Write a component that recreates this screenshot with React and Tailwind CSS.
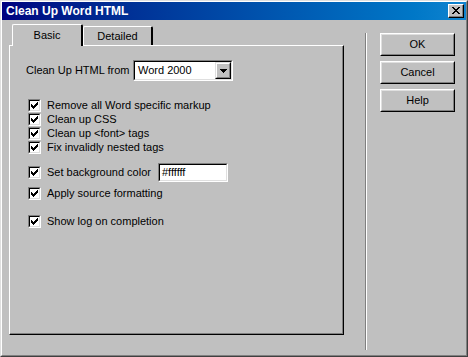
import { useState } from 'react';

const font = { fontFamily: '"Liberation Sans", Arial, sans-serif' };

// 7x7 classic check mark, one rect per pixel run
const checkRuns = [
  [6, 0, 1],
  [5, 1, 2],
  [0, 2, 1], [4, 2, 3],
  [0, 3, 2], [3, 3, 3],
  [0, 4, 5],
  [1, 5, 3],
  [2, 6, 1],
];

const Check = ({ checked, onToggle }) => (
  <div
    onClick={onToggle}
    className="w-[13px] h-[13px] shrink-0 border border-t-[#808080] border-l-[#808080] border-r-white border-b-white cursor-default"
  >
    <div className="w-full h-full border border-t-black border-l-black border-r-[#dfdfdf] border-b-[#dfdfdf] bg-white flex items-center justify-center">
      {checked && (
        <svg width="7" height="7" viewBox="0 0 7 7" shapeRendering="crispEdges">
          {checkRuns.map(([x, y, w], i) => (
            <rect key={i} x={x} y={y} width={w} height="1" fill="#000" />
          ))}
        </svg>
      )}
    </div>
  </div>
);

const Row = ({ label, checked, onToggle, className = '', children }) => (
  <div className={`flex items-center ${className}`}>
    <Check checked={checked} onToggle={onToggle} />
    <span className="ml-[6px] text-[11px] leading-[13px] text-black whitespace-nowrap">{label}</span>
    {children}
  </div>
);

const Sunken = ({ className = '', children }) => (
  <div className={`border border-t-[#808080] border-l-[#808080] border-r-white border-b-white ${className}`}>
    <div className="w-full h-full border border-t-black border-l-black border-r-[#dfdfdf] border-b-[#dfdfdf] bg-white flex items-center">
      {children}
    </div>
  </div>
);

const Btn = ({ children }) => (
  <button
    type="button"
    className="w-[75px] h-[23px] border border-t-white border-l-white border-r-black border-b-black p-0 bg-[#c0c0c0]"
  >
    <div className="w-full h-full border border-t-[#dfdfdf] border-l-[#dfdfdf] border-r-[#808080] border-b-[#808080] flex items-center justify-center text-[11px] text-black">
      {children}
    </div>
  </button>
);

export default function App() {
  const [tab, setTab] = useState('basic');
  const [opts, setOpts] = useState({
    remove: true,
    css: true,
    font: true,
    nested: true,
    bg: true,
    format: true,
    log: true,
  });
  const toggle = (k) => () => setOpts((o) => ({ ...o, [k]: !o[k] }));

  return (
    <div style={font} className="w-[468px] h-[357px] bg-[#c0c0c0] border border-t-[#dfdfdf] border-l-[#dfdfdf] border-r-[#404040] border-b-[#404040] select-none">
      <div className="w-full h-full border border-t-white border-l-white border-r-[#808080] border-b-[#808080]">
        {/* title bar */}
        <div className="h-[18px] bg-gradient-to-r from-[#000080] to-[#1084d0] flex items-center pl-[4px] pr-[2px]">
          <span className="text-white font-bold text-[12px] leading-none flex-1">Clean Up Word HTML</span>
          <button
            type="button"
            className="w-[16px] h-[14px] p-0 bg-[#c0c0c0] border border-t-white border-l-white border-r-black border-b-black"
          >
            <div className="w-full h-full border-r border-b border-r-[#808080] border-b-[#808080] flex items-center justify-center">
              <svg width="8" height="7" viewBox="0 0 8 7" shapeRendering="crispEdges">
                <path d="M0 0h2v1h1v1h2v-1h1v-1h2v1h-1v1h-1v1h-1v1h1v1h1v1h1v1h-2v-1h-1v-1h-2v1h-1v1h-2v-1h1v-1h1v-1h1v-1h-1v-1h-1v-1h-1z" fill="#000" />
              </svg>
            </div>
          </button>
        </div>

        <div className="flex pl-[7px] pt-[4px]">
          {/* tabbed area */}
          <div className="w-[335px]">
            <div className="flex h-[21px] pl-[3px] items-end relative z-10">
              <button
                type="button"
                onClick={() => setTab('basic')}
                className={`w-[71px] p-0 border-t border-l border-r-2 border-t-white border-l-white border-r-black rounded-tl-[2px] rounded-tr-[2px] bg-[#c0c0c0] text-[11px] text-black ${
                  tab === 'basic' ? 'h-[22px] mb-[-1px]' : 'h-[19px] mt-[2px]'
                }`}
              >
                Basic
              </button>
              <button
                type="button"
                onClick={() => setTab('detailed')}
                className={`w-[70px] p-0 border-t border-l border-r-2 border-t-white border-l-white border-r-black rounded-tl-[2px] rounded-tr-[2px] bg-[#c0c0c0] text-[11px] text-black ${
                  tab === 'detailed' ? 'h-[22px] mb-[-1px]' : 'h-[19px]'
                }`}
              >
                Detailed
              </button>
            </div>
            <div className="h-[290px] border border-t-white border-l-white border-r-black border-b-black">
              <div className="w-full h-full border-r border-b border-r-[#808080] border-b-[#808080] pl-[16px] pt-[14px]">
                {tab === 'basic' && (
                  <>
                    <div className="flex items-center">
                      <span className="text-[11px] text-black whitespace-nowrap w-[107px]">Clean Up HTML from</span>
                      <Sunken className="w-[100px] h-[21px]">
                        <span className="pl-[3px] text-[11px] text-black flex-1">Word 2000</span>
                        <div className="w-[16px] h-[17px] border border-t-[#dfdfdf] border-l-[#dfdfdf] border-r-black border-b-black bg-[#c0c0c0]">
                          <div className="w-full h-full border border-t-white border-l-white border-r-[#808080] border-b-[#808080] flex items-center justify-center">
                            <svg width="7" height="4" viewBox="0 0 7 4" shapeRendering="crispEdges">
                              <path d="M0 0h7v1h-1v1h-1v1h-1v1h-1v-1h-1v-1h-1v-1h-1z" fill="#000" />
                            </svg>
                          </div>
                        </div>
                      </Sunken>
                    </div>

                    <div className="pl-[2px] mt-[17px] flex flex-col">
                      <Row className="h-[14px]" label="Remove all Word specific markup" checked={opts.remove} onToggle={toggle('remove')} />
                      <Row className="h-[14px]" label="Clean up CSS" checked={opts.css} onToggle={toggle('css')} />
                      <Row className="h-[14px]" label="Clean up <font> tags" checked={opts.font} onToggle={toggle('font')} />
                      <Row className="h-[14px]" label="Fix invalidly nested tags" checked={opts.nested} onToggle={toggle('nested')} />
                      <Row className="h-[19px] mt-[9px]" label="Set background color" checked={opts.bg} onToggle={toggle('bg')}>
                        <Sunken className="ml-[7px] w-[70px] h-[19px]">
                          <span className="pl-[2px] text-[11px] text-black">#ffffff</span>
                        </Sunken>
                      </Row>
                      <Row className="h-[14px] mt-[4px]" label="Apply source formatting" checked={opts.format} onToggle={toggle('format')} />
                      <Row className="h-[14px] mt-[14px]" label="Show log on completion" checked={opts.log} onToggle={toggle('log')} />
                    </div>
                  </>
                )}
              </div>
            </div>
          </div>

          {/* separator */}
          <div className="ml-[21px] mt-[9px] w-[2px] h-[317px] border-l border-r border-l-[#808080] border-r-white" />

          {/* buttons */}
          <div className="ml-[13px] mt-[9px] flex flex-col gap-[5px]">
            <Btn>OK</Btn>
            <Btn>Cancel</Btn>
            <Btn>Help</Btn>
          </div>
        </div>
      </div>
    </div>
  );
}
